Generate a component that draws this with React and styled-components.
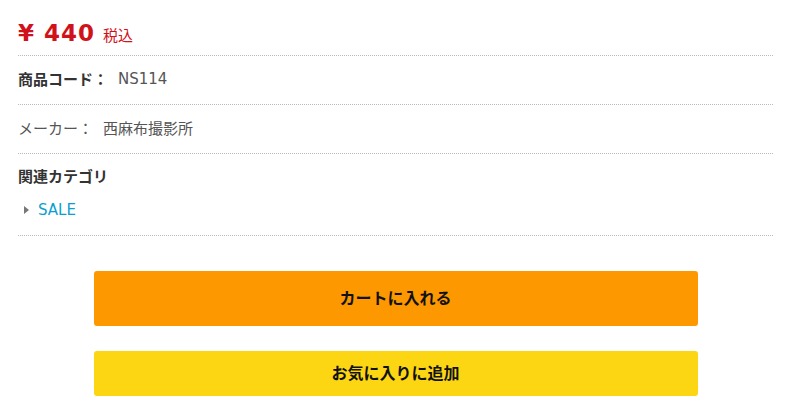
import React from 'react';
import styled, {createGlobalStyle} from 'styled-components';

const GlobalStyle = createGlobalStyle`
  * {
    box-sizing: border-box;
  }

  body {
    margin: 0;
    background: #fff;
    font-family: "DejaVu Sans", "Noto Sans CJK JP", sans-serif;
    color: #333;
  }
`

const App = () => {
    return (
        <Container>
            <GlobalStyle/>
            <PriceRow>
                <Price>¥ 440</Price>
                <Tax>税込</Tax>
            </PriceRow>

            <InfoRow>
                <Label bold>商品コード：</Label>
                <Value>NS114</Value>
            </InfoRow>

            <InfoRow>
                <Label>メーカー：</Label>
                <Value>西麻布撮影所</Value>
            </InfoRow>

            <CategoryBox>
                <h4>関連カテゴリ</h4>
                <CategoryLink href="#">SALE</CategoryLink>
            </CategoryBox>

            <ButtonArea>
                <ActionButton color="#fd9800" height={55}>カートに入れる</ActionButton>
                <ActionButton color="#fcd612" height={45}>お気に入りに追加</ActionButton>
            </ButtonArea>
        </Container>
    );
};

export default App;

const Container = styled.div`
  width: 755px;
  margin-left: 18px;
`

const Row = styled.div`
  border-bottom: 1px dotted #bbb;
`

const PriceRow = styled(Row)`
  display: flex;
  align-items: baseline;
  height: 56px;
  padding-top: 17px;
`

const Price = styled.span`
  color: #d0121b;
  font-size: 23px;
  font-weight: bold;
  letter-spacing: 1px;
  line-height: 32px;
`

const Tax = styled.span`
  color: #d0121b;
  font-family: "Noto Sans CJK JP", sans-serif;
  font-size: 15px;
  margin-left: 8px;
`

const InfoRow = styled(Row)`
  display: flex;
  align-items: center;
  height: 49px;
  padding-bottom: 3px;
  font-size: 15px;
`

const Label = styled.span`
  font-family: "Noto Sans CJK JP", sans-serif;
  font-weight: ${props => props.bold ? 'bold' : 'normal'};
  color: ${props => props.bold ? '#333' : '#555'};
`

const Value = styled.span`
  color: #555;
  margin-left: 10px;
`

const CategoryBox = styled(Row)`
  padding: 11px 0 14px;

  h4 {
    margin: 0;
    font-family: "Noto Sans CJK JP", sans-serif;
    font-size: 15px;
    font-weight: bold;
    line-height: 22px;
    color: #333;
  }
`

const CategoryLink = styled.a`
  display: flex;
  align-items: center;
  margin-top: 12px;
  padding-left: 6px;
  font-size: 15px;
  line-height: 22px;
  color: #0a9fd0;
  text-decoration: none;

  &::before {
    content: '';
    width: 0;
    height: 0;
    border-top: 4px solid transparent;
    border-bottom: 4px solid transparent;
    border-left: 5px solid #777;
    margin-right: 9px;
  }
`

const ButtonArea = styled.div`
  display: flex;
  flex-direction: column;
  align-items: center;
  gap: 25px;
  padding-top: 35px;
`

const ActionButton = styled.button`
  width: 80%;
  height: ${props => props.height}px;
  padding: 0 0 3px;
  border: none;
  border-radius: 3px;
  background-color: ${props => props.color};
  color: #111;
  font-family: "Noto Sans CJK JP", sans-serif;
  font-size: 16px;
  font-weight: bold;
  cursor: pointer;
`
